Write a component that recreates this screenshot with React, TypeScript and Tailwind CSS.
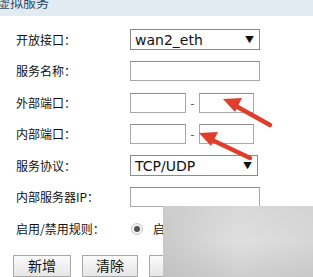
import React from 'react';

const font = { fontFamily: '"Noto Sans CJK SC", "Noto Sans", sans-serif' };

const Label = ({ children }: { children: React.ReactNode }) => (
  <span className="w-[114px] shrink-0 text-[12px] text-[#111]">{children}</span>
);

const TextBox = ({ w }: { w: string }) => (
  <div className={`${w} h-[20px] border border-[#a9a9a9] border-t-[#8f8f8f] bg-white`} />
);

const SelectBox = ({ value, w }: { value: string; w: string }) => (
  <div className={`${w} flex h-[21px] items-center justify-between border border-[#8a8a8a] bg-white pl-[4px] pr-[5px]`}>
    <span className="text-[14px] leading-none text-[#111]" style={{ fontFamily: '"DejaVu Sans", sans-serif' }}>
      {value}
    </span>
    <span className="text-[9px] leading-none text-[#111]">▼</span>
  </div>
);

const Row = ({ label, children }: { label: string; children: React.ReactNode }) => (
  <div className="flex h-[31.5px] items-center pl-[16px]">
    <Label>{label}</Label>
    {children}
  </div>
);

const PortPair = () => (
  <div className="flex items-center">
    <TextBox w="w-[56px]" />
    <span className="w-[13px] text-center text-[11px] text-[#333]">-</span>
    <TextBox w="w-[55px]" />
  </div>
);

const Button = ({ children, w }: { children?: React.ReactNode; w: string }) => (
  <div className={`${w} flex h-[22px] items-center justify-center border border-[#a8a8a8] bg-gradient-to-b from-[#fafafa] to-[#e6e6e6] text-[14px] text-[#111]`}>
    {children}
  </div>
);

export default function App() {
  return (
    <div className="relative h-[277px] w-[313px] overflow-hidden bg-white" style={font}>
      <div className="h-[16px] bg-[#e3ebf2]">
        <span className="-ml-[3px] block -translate-y-[5px] text-[13px] leading-none text-[#2b4a66]">虚拟服务</span>
      </div>

      <div className="pt-[8px]">
        <Row label="开放接口：">
          <SelectBox value="wan2_eth" w="w-[130px]" />
        </Row>
        <Row label="服务名称：">
          <TextBox w="w-[130px]" />
        </Row>
        <Row label="外部端口：">
          <PortPair />
        </Row>
        <Row label="内部端口：">
          <PortPair />
        </Row>
        <Row label="服务协议：">
          <SelectBox value="TCP/UDP" w="w-[128px]" />
        </Row>
        <Row label="内部服务器IP：">
          <TextBox w="w-[130px]" />
        </Row>
        <Row label="启用/禁用规则：">
          <div className="flex items-center gap-[10px] pl-[1px]">
            <div className="flex h-[12px] w-[12px] items-center justify-center rounded-full border border-[#c8c8c8] bg-[#f2f2f2]">
              <div className="h-[6px] w-[6px] rounded-full bg-[#555]" />
            </div>
            <span className="text-[12px] text-[#111]">启用</span>
          </div>
        </Row>
      </div>

      <div className="mt-[10px] flex gap-[11px] pl-[13px]">
        <Button w="w-[58px]">新增</Button>
        <Button w="w-[56px]">清除</Button>
        <Button w="w-[56px]" />
      </div>

      {/* blurred patch over the lower right */}
      <div className="absolute left-[163px] top-[206px] h-[71px] w-[150px] bg-gradient-to-r from-[#bdbdbd] via-[#dcdcdc] to-[#cfcfcf]" />
      <div className="absolute left-[163px] top-[206px] h-[71px] w-[150px] bg-gradient-to-b from-[#d6d6d6]/60 via-[#e8e8e8]/30 to-[#c4c4c4]/60" />

      <svg className="pointer-events-none absolute left-0 top-0" width="313" height="277">
        <g stroke="#e03e2d" strokeWidth="4.5" strokeLinecap="round" fill="#e03e2d">
          <line x1="270" y1="125" x2="234" y2="105" />
          <polygon points="223,99 242,98 235,112" stroke="none" />
          <line x1="250" y1="158" x2="210" y2="139" />
          <polygon points="199,133 218,132 211,146" stroke="none" />
        </g>
      </svg>
    </div>
  );
}
